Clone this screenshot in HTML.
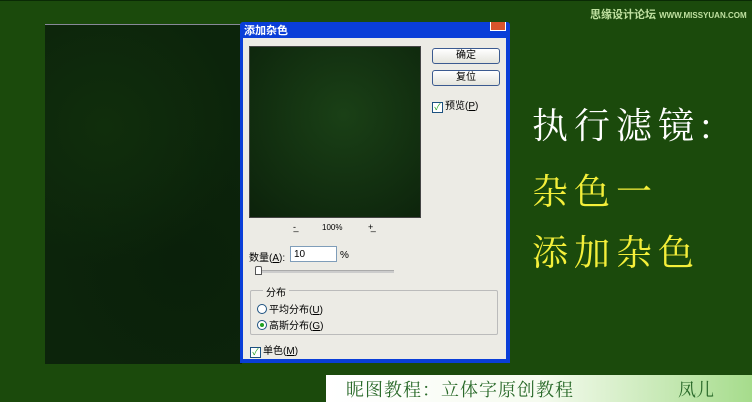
<!DOCTYPE html>
<html><head><meta charset="utf-8"><style>
body{margin:0;width:752px;height:402px;background:#1b4a0c;position:relative;overflow:hidden;font-family:"Liberation Sans","Noto Sans CJK SC",sans-serif}
.a{position:absolute}
.noise{background:radial-gradient(circle at 30% 30%,#102e0c,transparent 50%),radial-gradient(circle at 70% 70%,#0a200a,transparent 50%),#0c240b}
.btn{position:absolute;left:432px;width:66px;height:14px;border:1px solid #3b5a90;border-radius:3px;background:linear-gradient(#fff,#e4e4dc);font-size:10px;text-align:center;line-height:14px;color:#000}
.t{font-size:10px;color:#000;position:absolute}
.cb{display:inline-block;width:9px;height:9px;border:1px solid #1c5180;background:#fff;vertical-align:-1px;margin-right:2px;font-size:9px;line-height:9px;color:#21a121;text-align:center}
.rd{display:inline-block;width:8px;height:8px;border:1px solid #1c5180;border-radius:50%;background:#fff;vertical-align:-1px;margin-right:2px;position:relative}
.big{position:absolute;font-family:"Noto Serif CJK SC","WenQuanYi Zen Hei",serif;font-size:36px;letter-spacing:6px}
</style></head><body>
<div class="a" style="left:0;top:0;width:752px;height:1px;background:#0a2a05"></div>
<div class="a noise" style="left:45px;top:24px;width:197px;height:339px;border-top:1px solid #889"></div>
<div class="a" style="left:240px;top:22px;width:270px;height:341px;background:#0a3ed8;border-radius:3px 3px 0 0"></div>
<div class="a" style="left:244px;top:22px;color:#fff;font-size:11px;font-weight:bold">添加杂色</div>
<div class="a" style="left:490px;top:22px;width:14px;height:8px;background:#d9542c;border:1px solid #fff;border-top:0"></div>
<div class="a" style="left:243px;top:38px;width:263px;height:321px;background:#ecebe5"></div>
<div class="a" style="left:249px;top:46px;width:170px;height:170px;border:1px solid #444;background:radial-gradient(circle at 55% 40%,#1a4016,#0c220b)"></div>
<div class="btn" style="top:48px">确定</div>
<div class="btn" style="top:70px">复位</div>
<div class="t" style="left:432px;top:97px"><span class="cb">✓</span>预览(<u>P</u>)</div>
<div class="t" style="left:293px;top:222px;font-size:9px">-̲</div>
<div class="t" style="left:322px;top:223px;font-size:8px">100%</div>
<div class="t" style="left:368px;top:222px;font-size:9px">+̲</div>
<div class="t" style="left:249px;top:249px">数量(<u>A</u>):</div>
<div class="a" style="left:290px;top:246px;height:16px;border:1px solid #7f9db9;background:#fff;font-size:10px;line-height:16px;padding-left:3px;box-sizing:border-box;width:47px">10</div>
<div class="t" style="left:340px;top:250px">%</div>
<div class="a" style="left:256px;top:270px;width:138px;height:2px;background:#ccc;border-top:1px solid #aaa"></div>
<div class="a" style="left:255px;top:266px;width:5px;height:7px;background:#fff;border:1px solid #555;border-radius:2px 2px 0 0"></div>
<div class="a" style="left:250px;top:290px;width:246px;height:43px;border:1px solid #bbb;border-radius:2px"></div>
<div class="t" style="left:263px;top:284px;background:#ecebe5;padding:0 3px">分布</div>
<div class="t" style="left:257px;top:301px"><span class="rd"></span>平均分布(<u>U</u>)</div>
<div class="t" style="left:257px;top:317px"><span class="rd"><span style="position:absolute;left:2px;top:2px;width:4px;height:4px;border-radius:50%;background:#21a121"></span></span>高斯分布(<u>G</u>)</div>
<div class="t" style="left:250px;top:342px"><span class="cb">✓</span>单色(<u>M</u>)</div>
<div class="big" style="left:532px;top:98px;color:#fff">执行滤镜:</div>
<div class="big" style="left:532px;top:164px;color:#f4ef3a">杂色一</div>
<div class="big" style="left:532px;top:225px;color:#f4ef3a">添加杂色</div>
<div class="a" style="left:590px;top:6px;color:#bfe0a0;font-size:11px;font-weight:bold">思缘设计论坛 <span style="font-size:8px">WWW.MISSYUAN.COM</span></div>
<div class="a" style="left:326px;top:375px;width:426px;height:27px;background:linear-gradient(90deg,#fff 0%,#f6fbf0 50%,#a6dc8c 100%)"></div>
<div class="a" style="left:346px;top:376px;font-size:18px;color:#2a6a2a;font-family:'Noto Serif CJK SC',serif;letter-spacing:1px">昵图教程：立体字原创教程</div>
<div class="a" style="left:678px;top:376px;font-size:18px;color:#2a6a2a;font-family:'Noto Serif CJK SC',serif">凤儿</div>
</body></html>
